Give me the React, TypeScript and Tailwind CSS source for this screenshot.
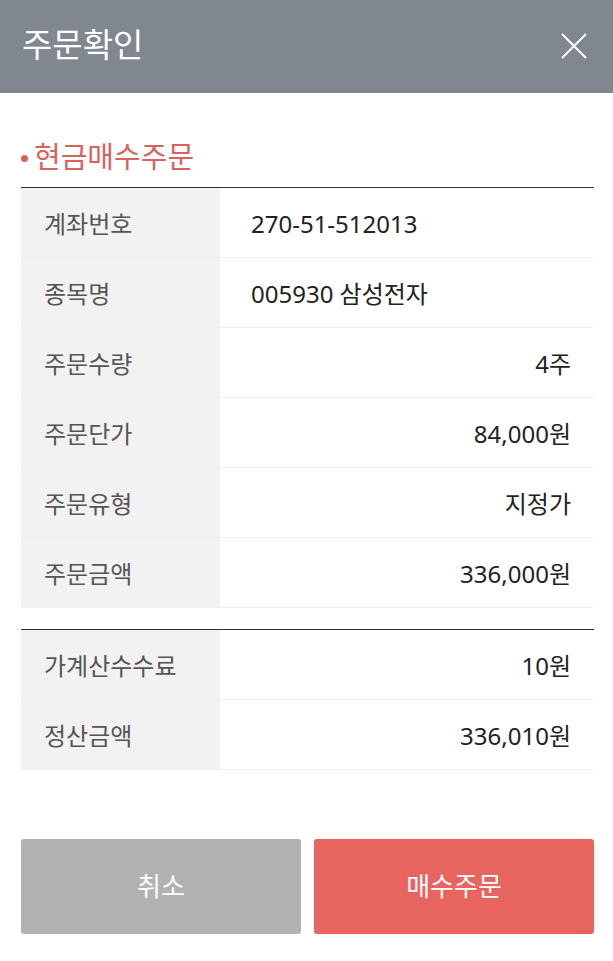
import React from "react";

const font = { fontFamily: '"Noto Sans", "Noto Sans CJK KR", sans-serif' };

type Row = { label: string; value: string; align: "left" | "right" };

const rows1: Row[] = [
  { label: "계좌번호", value: "270-51-512013", align: "left" },
  { label: "종목명", value: "005930 삼성전자", align: "left" },
  { label: "주문수량", value: "4주", align: "right" },
  { label: "주문단가", value: "84,000원", align: "right" },
  { label: "주문유형", value: "지정가", align: "right" },
  { label: "주문금액", value: "336,000원", align: "right" },
];

const rows2: Row[] = [
  { label: "가계산수수료", value: "10원", align: "right" },
  { label: "정산금액", value: "336,010원", align: "right" },
];

function Table({ rows }: { rows: Row[] }) {
  return (
    <div className="border-t border-[#333333]">
      {rows.map((r) => (
        <div key={r.label} className="flex h-[70px] border-b border-[#efefef]">
          <div className="w-[199px] bg-[#f2f2f2] flex items-center pl-[23px] pt-[2px] text-[24px] text-[#555555]">
            {r.label}
          </div>
          <div
            className={
              r.align === "left"
                ? "flex-1 flex items-center pl-[31px] pt-[2px] text-[24px] text-[#222222]"
                : "flex-1 flex items-center justify-end pr-[23px] pt-[2px] text-[24px] text-[#222222]"
            }
          >
            {r.value}
          </div>
        </div>
      ))}
    </div>
  );
}

export default function App() {
  return (
    <div className="w-[613px] h-[961px] bg-white" style={font}>
      <div className="h-[93px] bg-[#80878f] flex items-center justify-between pl-[22px] pr-[26px]">
        <span className="text-white text-[33px] leading-none -mt-[4px]">주문확인</span>
        <svg width="26" height="26" viewBox="0 0 26 26" className="-mt-[2px]">
          <path d="M1 1 L25 25 M25 1 L1 25" stroke="#ffffff" strokeWidth="2" />
        </svg>
      </div>
      <div className="pl-[21px] pr-[19px]">
        <div className="h-[94px] flex items-center pt-[32px]">
          <span className="w-[7px] h-[7px] rounded-full bg-[#d9625f] mr-[6px] mt-[4px]" />
          <span className="text-[#d9625f] text-[29px] leading-none">현금매수주문</span>
        </div>
        <Table rows={rows1} />
        <div className="h-[21px]" />
        <Table rows={rows2} />
        <div className="flex gap-[13px] mt-[69px]">
          <button className="flex-1 h-[95px] rounded-[3px] bg-[#b2b2b2] text-white text-[26px]">
            취소
          </button>
          <button className="flex-1 h-[95px] rounded-[3px] bg-[#e8645f] text-white text-[26px]">
            매수주문
          </button>
        </div>
      </div>
    </div>
  );
}
